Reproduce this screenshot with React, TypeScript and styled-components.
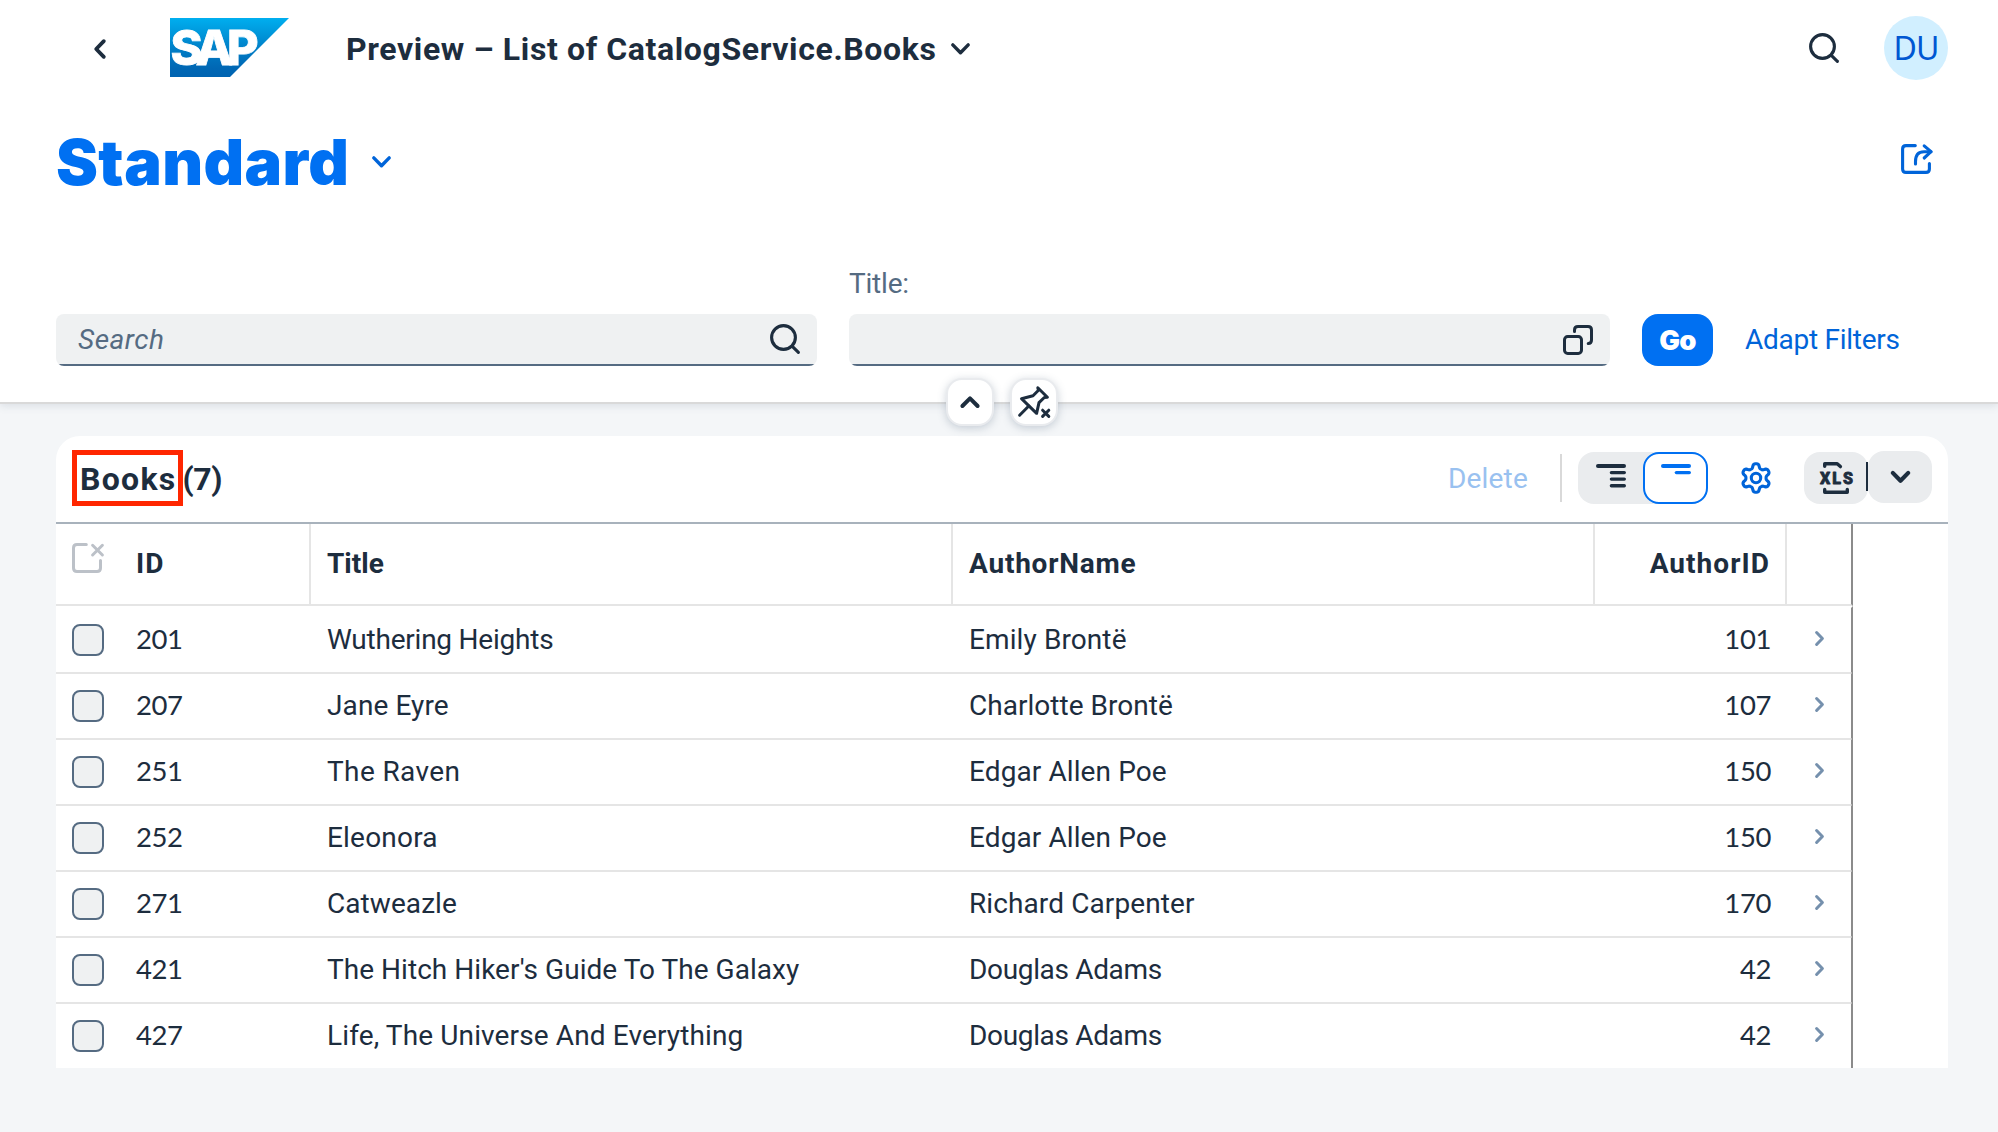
import React from 'react';
import styled, { createGlobalStyle } from 'styled-components';

const ink = '#1d2d3e';
const link = '#0064d9';
const brand = '#0070f2';
const muted = '#556b82';
const sans = `Roboto, "Open Sans", sans-serif`;
const heavy = `Inter, "Open Sans", sans-serif`;
const columns = '64px 191px 642px 642px 192px 66px';

const GlobalStyle = createGlobalStyle`
  *, *::before { box-sizing: border-box; }
  body { margin: 0; background: #f4f6f8; color: ${ink}; font-family: ${sans}; font-size: 28px; }
  button { font: inherit; color: inherit; border: 0; background: none; padding: 0; margin: 0; }
  svg { display: block; flex: none; overflow: visible; }
`;

const Page = styled.div`
  width: 1998px;
  height: 1132px;
  overflow: hidden;
  background: #f4f6f8;
`;

const PageHeader = styled.header`
  position: relative;
  height: 404px;
  background: #fff;
  border-bottom: 2px solid #d9d9d9;
  box-shadow: 0 2px 8px rgba(85, 107, 130, 0.16);
`;

const ShellBar = styled.div`
  display: flex;
  align-items: center;
  height: 96px;
  padding: 0 50px 0 94px;
`;

const LogoLink = styled.a`
  margin: 0 57px 1px 64px;
`;

const AppTitle = styled.button`
  display: flex;
  align-items: center;
  gap: 15px;
  padding-top: 2px;
  font-size: 32px;
  font-weight: 700;
  letter-spacing: 0.62px;
  white-space: nowrap;
`;

const Spacer = styled.div`
  flex: 1;
`;

const Avatar = styled.div`
  display: flex;
  align-items: center;
  justify-content: center;
  width: 64px;
  height: 64px;
  margin-left: 45px;
  padding-bottom: 2px;
  border-radius: 50%;
  background: #d1efff;
  color: #0057d2;
  font-family: "Noto Sans", sans-serif;
  font-size: 32px;
  letter-spacing: -0.8px;
`;

const VariantRow = styled.div`
  display: flex;
  align-items: center;
  height: 132px;
  padding: 0 66px 0 56px;
`;

const VariantTitle = styled.h1`
  margin: 0 23px 0 0;
  color: ${brand};
  font-family: ${heavy};
  font-size: 63px;
  font-weight: 900;
  letter-spacing: 0.4px;
  line-height: 80px;
`;

const ShareButton = styled.button`
  padding-bottom: 6px;
`;

const FilterBar = styled.div`
  display: flex;
  align-items: flex-end;
  gap: 32px;
  height: 138px;
  padding: 0 56px;
`;

const Field = styled.div`
  width: 761px;
`;

const Label = styled.label`
  display: block;
  margin-bottom: 14px;
  color: ${muted};
  line-height: 32px;
  letter-spacing: -0.2px;
`;

const Input = styled.div`
  display: flex;
  align-items: center;
  justify-content: space-between;
  height: 52px;
  padding: 0 17px 2px 22px;
  border-radius: 8px;
  background: linear-gradient(${muted}, ${muted}) bottom / 100% 2px no-repeat #eff1f2;
`;

const Placeholder = styled.span`
  color: ${muted};
  font-style: italic;
  letter-spacing: 0.5px;
`;

const GoButton = styled.button`
  width: 71px;
  height: 52px;
  padding-bottom: 1px;
  border-radius: 16px;
  background: ${brand};
  color: #fff;
  font-family: ${heavy};
  font-size: 27.5px;
  font-weight: 900;
  letter-spacing: -0.6px;
`;

const AdaptLink = styled.button`
  height: 52px;
  padding-bottom: 2px;
  color: ${link};
  letter-spacing: -0.27px;
`;

const HeaderToggles = styled.div`
  position: absolute;
  left: 946px;
  top: 378px;
  display: flex;
  gap: 16px;
`;

const ToggleButton = styled.button`
  display: flex;
  align-items: center;
  justify-content: center;
  width: 48px;
  height: 48px;
  border: 2px solid #e9ebee;
  border-radius: 16px;
  background: #fff;
  box-shadow: 0 2px 8px rgba(85, 107, 130, 0.3);
`;

const Panel = styled.main`
  width: 1892px;
  height: 632px;
  margin: 32px 0 0 56px;
  border-radius: 24px 24px 0 0;
  background: #fff;
`;

const Toolbar = styled.div`
  display: flex;
  align-items: center;
  height: 88px;
  padding: 0 16px 2px 24px;
  border-bottom: 2px solid #a8b2bc;
`;

const TableTitle = styled.h2`
  display: flex;
  gap: 6px;
  margin: 0;
  padding-top: 1px;
  font-size: 32px;
  line-height: 40px;
  letter-spacing: -0.5px;
`;

const Marked = styled.span`
  position: relative;
  letter-spacing: 1.3px;

  &::before {
    content: '';
    position: absolute;
    left: -8px;
    top: -9px;
    width: 111px;
    height: 56px;
    border: 5px solid #ff2600;
  }
`;

const DeleteButton = styled.button`
  color: #99c1f0;
  letter-spacing: 0.2px;
`;

const Separator = styled.div`
  width: 2px;
  height: 48px;
  margin: 0 16px 0 32px;
  background: #d9d9d9;
`;

const Segmented = styled.div`
  display: flex;
  width: 130px;
  border-radius: 16px;
  background: #eaecee;
`;

const Segment = styled.button<{ $selected?: boolean }>`
  display: flex;
  justify-content: center;
  width: 65px;
  height: 52px;
  padding-top: ${(p) => (p.$selected ? 10 : 12)}px;
  border: ${(p) => (p.$selected ? `2px solid ${brand}` : '0')};
  border-radius: 16px;
  background: ${(p) => (p.$selected ? '#fff' : 'transparent')};
  color: ${(p) => (p.$selected ? brand : ink)};
`;

const SettingsButton = styled.button`
  margin: 0 33px;
`;

const ExportGroup = styled.div`
  display: flex;
  align-items: flex-start;
`;

const ExportButton = styled.button<{ $raised?: boolean }>`
  position: relative;
  display: flex;
  align-items: center;
  justify-content: center;
  width: 64px;
  height: 52px;
  margin-top: ${(p) => (p.$raised ? -1 : 0)}px;
  border-radius: 16px;
  background: #eaecee;
`;

const ExportDivider = styled.i`
  position: absolute;
  z-index: 1;
  right: 0;
  top: 10px;
  width: 2px;
  height: 29px;
  background: ${ink};
`;

const HeaderRow = styled.div`
  display: grid;
  grid-template-columns: ${columns};
  grid-template-rows: 80px 2px;
  height: 84px;
`;

const HeaderCell = styled.div<{ $right?: boolean; $tracking?: number }>`
  display: flex;
  align-items: center;
  justify-content: ${(p) => (p.$right ? 'flex-end' : 'flex-start')};
  padding: 0 ${(p) => (p.$right ? 15 : 16)}px 1px 16px;
  border-right: 2px solid #e5e5e5;
  font-weight: 700;
  letter-spacing: ${(p) => p.$tracking ?? 0}px;
`;

const HeaderLine = styled.div`
  grid-column: 1 / 6;
  background: #e5e5e5;
`;

const HeaderSelect = styled.div`
  padding: 19px 0 0 16px;
  color: #bcc1c8;
`;

const HeaderEnd = styled.div`
  grid-column: 6;
  grid-row: 1 / 3;
  border-right: 2px solid #8b8b8b;
  border-bottom: 2px solid #e5e5e5;
`;

const Row = styled.div`
  display: grid;
  grid-template-columns: ${columns};
  height: 66px;

  &:last-child { height: 64px; }
  &:last-child > * { border-bottom: 0; }
`;

const Cell = styled.div<{ $tracking?: number }>`
  display: flex;
  align-items: center;
  padding: 0 16px;
  border-bottom: 2px solid #e5e5e5;
  letter-spacing: ${(p) => p.$tracking ?? 0}px;
  white-space: nowrap;
`;

const TextCell = styled(Cell)`
  padding-bottom: 1px;
`;

const NumberCell = styled(Cell)<{ $right?: boolean }>`
  justify-content: ${(p) => (p.$right ? 'flex-end' : 'flex-start')};
  padding-bottom: 3px;
  font-family: Lato, sans-serif;
  font-size: 27.5px;
  letter-spacing: -0.4px;
`;

const NavCell = styled.div`
  display: flex;
  align-items: center;
  padding: 0 0 3px 28px;
  margin-top: -2px;
  border-top: 2px solid transparent;
  border-right: 2px solid #8b8b8b;
  border-bottom: 2px solid #e5e5e5;
  color: #7590ad;
`;

const Checkbox = styled.span`
  width: 32px;
  height: 32px;
  border: 2px solid ${muted};
  border-radius: 8px;
  background: #eff1f2;
`;

type IconProps = { width: number; height: number; stroke?: number; color?: string; children: React.ReactNode };

const Icon = ({ width, height, stroke = 3, color = 'currentColor', children }: IconProps) => (
  <svg
    width={width}
    height={height}
    viewBox={`0 0 ${width} ${height}`}
    fill="none"
    stroke={color}
    strokeWidth={stroke}
    strokeLinecap="round"
    strokeLinejoin="round"
  >
    {children}
  </svg>
);

const ChevronDown = ({ color = ink, stroke = 3.4 }: { color?: string; stroke?: number }) => (
  <Icon width={19} height={12} stroke={stroke} color={color}>
    <path d="M1.8 1.9 L9.5 9.8 L17.2 1.9" />
  </Icon>
);

const SearchIcon = () => (
  <Icon width={30} height={30} color={ink} stroke={3.1}>
    <circle cx="13.5" cy="13.5" r="11.9" />
    <path d="M22.3 22.3 L28.4 28.4" />
  </Icon>
);

// Six blunt teeth: the tanh flattens both the tips and the valleys of the wave.
const gearOutline =
  Array.from({ length: 120 }, (_, i) => {
    const angle = (i * Math.PI) / 60;
    const radius = 12.2 + 2.25 * Math.tanh(1.7 * Math.cos(6 * angle));
    const x = 15 + radius * Math.sin(angle);
    const y = 16 - radius * Math.cos(angle);
    return `${i ? 'L' : 'M'}${x.toFixed(2)} ${y.toFixed(2)}`;
  }).join(' ') + ' Z';

const Logo = () => (
  <svg width="119" height="59" viewBox="0 0 119 59">
    <defs>
      <linearGradient id="logoFill" x1="0" y1="0" x2="0" y2="1">
        <stop offset="0" stopColor="#00aeef" />
        <stop offset="0.25" stopColor="#0098dc" />
        <stop offset="0.55" stopColor="#007cc5" />
        <stop offset="0.85" stopColor="#0067b4" />
        <stop offset="1" stopColor="#0063b1" />
      </linearGradient>
    </defs>
    <path d="M0 0 H119 L60 59 H0 Z" fill="url(#logoFill)" />
    <text
      x="0.5"
      y="47"
      fill="#fff"
      stroke="#fff"
      strokeWidth="0.8"
      fontFamily="Inter, sans-serif"
      fontWeight="800"
      fontSize="48.5"
      textLength="88"
      lengthAdjust="spacing"
    >
      SAP
    </text>
  </svg>
);

type Book = { id: number; title: string; author: string; authorId: number; tt: number; at: number };

const books: Book[] = [
  { id: 201, title: 'Wuthering Heights', author: 'Emily Brontë', authorId: 101, tt: -0.23, at: 0.1 },
  { id: 207, title: 'Jane Eyre', author: 'Charlotte Brontë', authorId: 107, tt: 0.1, at: 0.03 },
  { id: 251, title: 'The Raven', author: 'Edgar Allen Poe', authorId: 150, tt: 0.38, at: 0.1 },
  { id: 252, title: 'Eleonora', author: 'Edgar Allen Poe', authorId: 150, tt: 0.2, at: 0.1 },
  { id: 271, title: 'Catweazle', author: 'Richard Carpenter', authorId: 170, tt: 0.07, at: 0.1 },
  { id: 421, title: "The Hitch Hiker's Guide To The Galaxy", author: 'Douglas Adams', authorId: 42, tt: 0.04, at: -0.34 },
  { id: 427, title: 'Life, The Universe And Everything', author: 'Douglas Adams', authorId: 42, tt: 0.13, at: -0.34 },
];

export default function App() {
  return (
    <Page>
      <GlobalStyle />
      <PageHeader>
        <ShellBar>
          <Icon width={12} height={20} stroke={3.8} color={ink}>
            <path d="M9.8 3.2 L2.2 11 L9.8 18.8" />
          </Icon>
          <LogoLink>
            <Logo />
          </LogoLink>
          <AppTitle>
            Preview – List of CatalogService.Books
            <ChevronDown />
          </AppTitle>
          <Spacer />
          <SearchIcon />
          <Avatar>DU</Avatar>
        </ShellBar>

        <VariantRow>
          <VariantTitle>Standard</VariantTitle>
          <ChevronDown color={link} />
          <Spacer />
          <ShareButton>
            <Icon width={31} height={30} color={link} stroke={3.1}>
              <path d="M14.3 1.6 H5 Q1.6 1.6 1.6 5 V25 Q1.6 28.4 5 28.4 H25 Q28.4 28.4 28.4 25 V19.6" />
              <path d="M14.5 20 V17.5 Q14.5 7.7 23 7.7 H30" />
              <path d="M23.2 1.8 L30 7.7 L23.2 14" />
            </Icon>
          </ShareButton>
        </VariantRow>

        <FilterBar>
          <Field>
            <Input>
              <Placeholder>Search</Placeholder>
              <SearchIcon />
            </Input>
          </Field>
          <Field>
            <Label>Title:</Label>
            <Input>
              <span />
              <Icon width={30} height={28} color={ink}>
                <rect x="1.5" y="11.5" width="17" height="17" rx="3.2" />
                <path d="M11.5 6.5 V5 Q11.5 1.5 15 1.5 H25 Q28.5 1.5 28.5 5 V15 Q28.5 18.5 25.2 18.5" />
              </Icon>
            </Input>
          </Field>
          <GoButton>Go</GoButton>
          <AdaptLink>Adapt Filters</AdaptLink>
        </FilterBar>

        <HeaderToggles>
          <ToggleButton>
            <Icon width={20} height={12} stroke={4} color={ink}>
              <path d="M2.4 10 L10 2.4 L17.6 10" />
            </Icon>
          </ToggleButton>
          <ToggleButton>
            <Icon width={44} height={44} color={ink}>
              <path d="M9.5 18.7 L21 15.8 L26.5 10.3 L25.8 7.8 L35.4 17.3 L32.3 17.5 L27 22.6 L24.6 33.3 Z" />
              <path d="M16.8 26 L7.6 35.2" />
              <path d="M30.6 30.2 L36.8 36.4 M36.8 30.2 L30.6 36.4" />
            </Icon>
          </ToggleButton>
        </HeaderToggles>
      </PageHeader>

      <Panel>
        <Toolbar>
          <TableTitle>
            <Marked>Books</Marked>
            <span>(7)</span>
          </TableTitle>
          <Spacer />
          <DeleteButton>Delete</DeleteButton>
          <Separator />
          <Segmented>
            <Segment>
              <Icon width={30} height={26} stroke={3.4}>
                <path d="M2 2 H28" strokeWidth="4" />
                <path d="M15.4 8.6 H28.3 M15.4 15.1 H28.3 M15.4 21.7 H28.3" />
              </Icon>
            </Segment>
            <Segment $selected>
              <Icon width={30} height={12} stroke={3.4}>
                <path d="M2 2 H28" strokeWidth="4" />
                <path d="M15.4 8.6 H28.3" />
              </Icon>
            </Segment>
          </Segmented>
          <SettingsButton>
            <Icon width={30} height={32} color={link} stroke={3.1}>
              <path d={gearOutline} />
              <circle cx="15" cy="16" r="4.7" />
            </Icon>
          </SettingsButton>
          <ExportGroup>
            <ExportButton>
              <svg width="34" height="34" viewBox="0 0 34 34" fill="none" stroke={ink} strokeWidth="3.4" strokeLinecap="round" strokeLinejoin="round">
                <path d="M5.7 5.2 V2.7 H18.2 L21.4 5.6" />
                <path d="M5.7 28.4 V31.2 H28.3 V28.4" />
                <text x="1" y="22.8" fill={ink} stroke={ink} strokeWidth="0.9" fontFamily="Roboto, sans-serif" fontWeight="800" fontSize="16" textLength="33">
                  XLS
                </text>
              </svg>
              <ExportDivider />
            </ExportButton>
            <ExportButton $raised>
              <ChevronDown stroke={4.2} />
            </ExportButton>
          </ExportGroup>
        </Toolbar>

        <HeaderRow>
          <HeaderSelect>
            <Icon width={32} height={30}>
              <path d="M14.3 1.5 H5 Q1.5 1.5 1.5 5 V25 Q1.5 28.5 5 28.5 H25 Q28.5 28.5 28.5 25 V17.5" />
              <path d="M20.6 2.3 L30.4 12 M30.4 2.3 L20.6 12" />
            </Icon>
          </HeaderSelect>
          <HeaderCell $tracking={1}>ID</HeaderCell>
          <HeaderCell>Title</HeaderCell>
          <HeaderCell $tracking={0.77}>AuthorName</HeaderCell>
          <HeaderCell $right $tracking={1.05}>AuthorID</HeaderCell>
          <HeaderLine />
          <HeaderEnd />
        </HeaderRow>

        {books.map((book) => (
          <Row key={book.id}>
            <Cell>
              <Checkbox />
            </Cell>
            <NumberCell>{book.id}</NumberCell>
            <TextCell $tracking={book.tt}>{book.title}</TextCell>
            <TextCell $tracking={book.at}>{book.author}</TextCell>
            <NumberCell $right>{book.authorId}</NumberCell>
            <NavCell>
              <Icon width={9} height={15} stroke={3}>
                <path d="M1.6 1.5 L7.4 7.5 L1.6 13.5" />
              </Icon>
            </NavCell>
          </Row>
        ))}
      </Panel>
    </Page>
  );
}
